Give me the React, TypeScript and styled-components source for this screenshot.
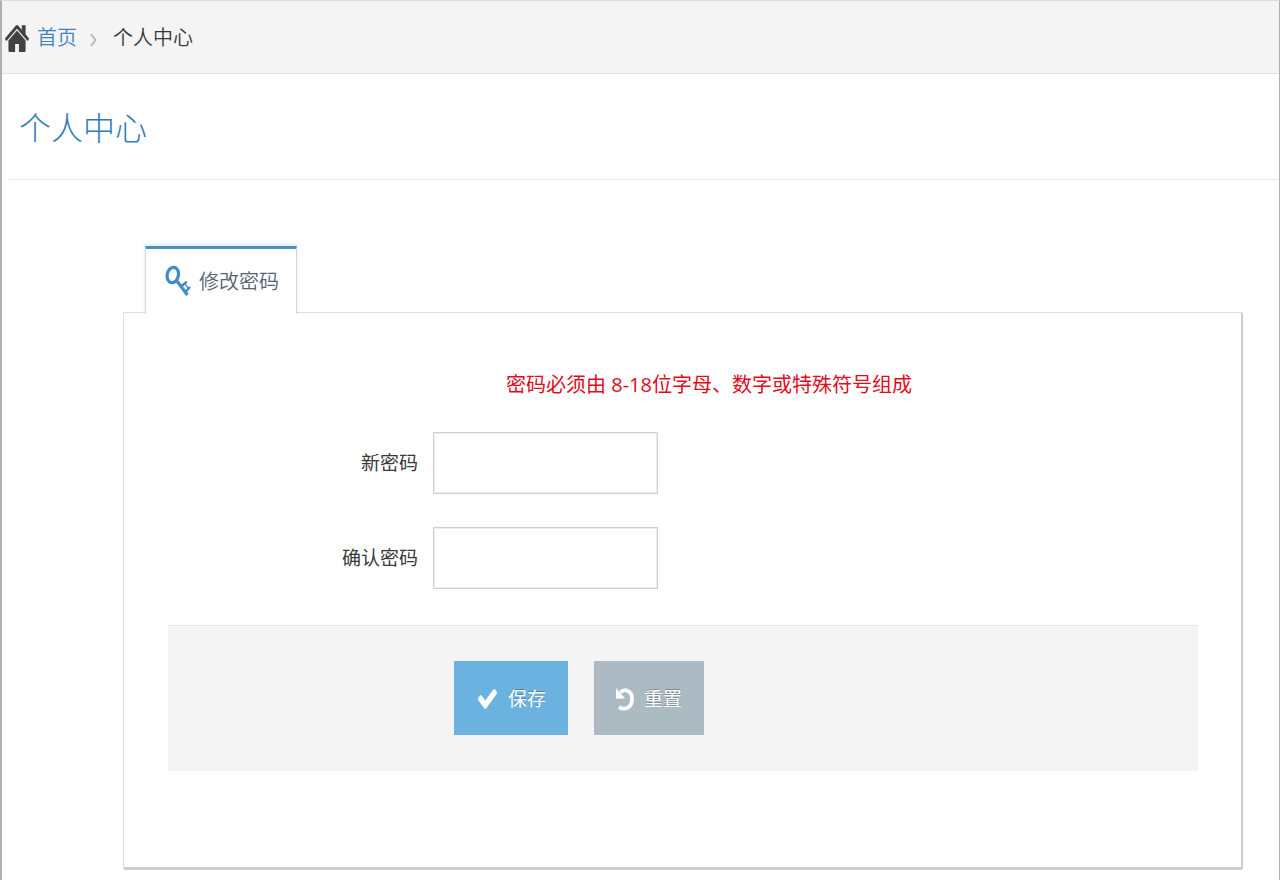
import React from 'react';
import styled, { createGlobalStyle } from 'styled-components';

const GlobalStyle = createGlobalStyle`
  *, *::before, *::after { box-sizing: border-box; }
  body {
    margin: 0;
    background: #fff;
    color: #393939;
    font-family: 'Open Sans', 'Noto Sans CJK SC', sans-serif;
    font-size: 20px;
    line-height: 28px;
  }
`;

const Page = styled.div`
  min-height: 100vh;
  border: solid #b0b0b0;
  border-width: 1px 1px 0 2px;
  border-top-color: #dcdcdc;
`;

const Breadcrumb = styled.nav`
  display: flex;
  align-items: center;
  height: 73px;
  padding: 2px 0 0 3px;
  background: #f4f4f4;
  border-bottom: 1px solid #e2e2e2;
  font-weight: 350;
`;

const HomeLink = styled.a`
  display: flex;
  align-items: center;
  gap: 8px;
  color: #3f82bd;
  text-decoration: none;
`;

const Separator = styled.svg`
  margin: 4px 16px 0 13px;
`;

const PageHeader = styled.header`
  margin-left: 7px;
  padding: 30px 10px 27px;
  border-bottom: 1px solid #e8e8e8;
`;

const Title = styled.h1`
  margin: 0;
  color: #2b7dbc;
  font-size: 32px;
  font-weight: 300;
  line-height: 48px;
`;

const Content = styled.main`
  padding: 66px 36px 10px 121px;
`;

const TabList = styled.div`
  display: flex;
  padding-left: 22px;
`;

const Tab = styled.button`
  display: flex;
  align-items: center;
  gap: 8px;
  position: relative;
  z-index: 1;
  width: 152px;
  height: 68px;
  margin-bottom: -2px;
  padding: 0 0 0 19px;
  background: #fff;
  border: solid #d2d7dd;
  border-width: 3px 1px 0 1px;
  border-top-color: #4c8fbd;
  box-shadow: 0 -2px 4px rgba(76, 143, 189, 0.2);
  clip-path: inset(-6px -6px 0 -6px);
  color: #576373;
  font: inherit;
  font-weight: 350;
`;

const Panel = styled.form`
  padding: 58px 43px 96px 44px;
  border: solid #dcdcdc;
  border-width: 1px 2px 3px 1px;
  border-right-color: #cdcdcd;
  border-bottom-color: #cdcdcd;
  border-radius: 2px;
`;

const Hint = styled.p`
  margin: 0 0 33px;
  padding-left: 52px;
  color: #e00b1c;
  text-align: center;
`;

const Field = styled.div`
  display: flex;
  align-items: center;
  gap: 15px;
  margin-bottom: 33px;
`;

const Label = styled.label`
  width: 250px;
  color: #393939;
  font-size: 19px;
  text-align: right;
`;

const TextInput = styled.input`
  width: 225px;
  height: 62px;
  padding: 4px 8px;
  background: #fff;
  border: 1px solid #d0d0d0;
  border-radius: 0;
  box-shadow: inset 0 0 0 1px #eee;
  font: inherit;
`;

const Actions = styled.div`
  display: flex;
  gap: 26px;
  margin-top: 36px;
  padding: 35px 20px 36px 286px;
  background: #f4f4f4;
  border-top: 1px solid #e5e5e5;
`;

const ActionButton = styled.button<{ $tone: string }>`
  display: flex;
  align-items: center;
  gap: 10px;
  height: 74px;
  padding: 2px 22px 0;
  background: ${({ $tone }) => $tone};
  border: 0;
  color: #fff;
  font: inherit;
  font-size: 19px;
  text-shadow: 0 -1px 0 rgba(0, 0, 0, 0.25);
`;

const HomeIcon = () => (
  <svg width="24" height="27" viewBox="90 250 1610 1290" preserveAspectRatio="none" fill="#414141" aria-hidden="true">
    <path d="M1472 992v480q0 26-19 45t-45 19h-384v-384h-256v384h-384q-26 0-45-19t-19-45v-480q0-1 .5-3t.5-3l575-474 575 474q1 2 1 6zm223-69l-62 74q-8 9-21 11h-3q-13 0-21-7l-692-577-692 577q-12 8-24 7-13-2-21-11l-62-74q-8-10-7-23.5t11-21.5l719-599q32-26 76-26t76 26l244 204v-195q0-14 9-23t23-9h192q14 0 23 9t9 23v408l219 182q10 8 11 21.5t-7 23.5z" />
  </svg>
);

const KeyIcon = () => (
  <svg width="26" height="34" viewBox="0 0 26 34" fill="none" stroke="#428bca" aria-hidden="true">
    <ellipse cx="7.8" cy="10" rx="5.6" ry="7.8" strokeWidth="3.2" transform="rotate(12 7.8 10)" />
    <path d="M11.5 15.5 22.5 30" strokeWidth="3.2" />
    <path d="M16 21.5 21.8 16.8M20.3 27 25 22" strokeWidth="2.4" />
    <path d="M19.8 18.6 23.8 23.6" strokeWidth="1.4" />
  </svg>
);

const CheckIcon = () => (
  <svg width="22" height="20" viewBox="0 0 22 20" aria-hidden="true">
    <path
      transform="translate(0.5 -5.6) scale(0.01226 0.01684)"
      fill="#fff"
      d="M1671 566q0 40-28 68l-724 724-136 136q-28 28-68 28t-68-28l-136-136-362-362q-28-28-28-68t28-68l136-136q28-28 68-28t68 28l294 295 656-657q28-28 68-28t68 28l136 136q28 28 28 68z"
    />
  </svg>
);

const UndoIcon = () => (
  <svg width="18" height="24" viewBox="0 0 18 24" aria-hidden="true">
    <path d="M4.5 5.5C8 1.5 16 2.5 16 12.2 16 20.5 9 23.5 3 20.3" fill="none" stroke="#fff" strokeWidth="3.8" />
    <path d="M0 1.5V11.2H8.6Z" fill="#fff" stroke="#fff" strokeWidth="0.6" strokeLinejoin="round" />
  </svg>
);

export default function App() {
  return (
    <>
      <GlobalStyle />
      <Page>
        <Breadcrumb aria-label="breadcrumb">
          <HomeLink href="#">
            <HomeIcon />
            首页
          </HomeLink>
          <Separator width="7" height="14" viewBox="0 0 7 14" fill="none" stroke="#b2b6bf" strokeWidth="2" aria-hidden="true">
            <path d="M1 1 5.5 7 1 13" />
          </Separator>
          <span>个人中心</span>
        </Breadcrumb>
        <PageHeader>
          <Title>个人中心</Title>
        </PageHeader>
        <Content>
          <TabList role="tablist">
            <Tab type="button" role="tab" aria-selected="true">
              <KeyIcon />
              修改密码
            </Tab>
          </TabList>
          <Panel>
            <Hint>密码必须由 8-18位字母、数字或特殊符号组成</Hint>
            <Field>
              <Label htmlFor="new-password">新密码</Label>
              <TextInput id="new-password" type="password" />
            </Field>
            <Field>
              <Label htmlFor="confirm-password">确认密码</Label>
              <TextInput id="confirm-password" type="password" />
            </Field>
            <Actions>
              <ActionButton type="submit" $tone="#6cb2e0">
                <CheckIcon />
                保存
              </ActionButton>
              <ActionButton type="reset" $tone="#abbac3">
                <UndoIcon />
                重置
              </ActionButton>
            </Actions>
          </Panel>
        </Content>
      </Page>
    </>
  );
}
